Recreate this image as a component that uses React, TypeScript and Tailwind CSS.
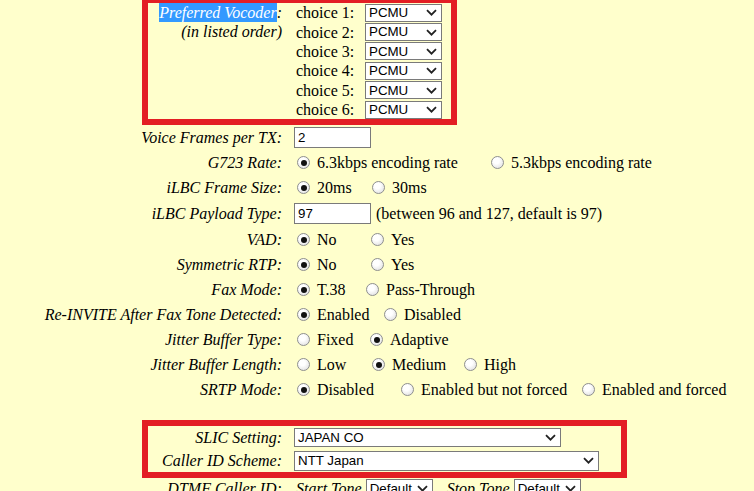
import React from 'react';

type Opt = { label: string; checked?: boolean; w?: string };

const Radio = ({ checked }: { checked?: boolean }) => (
  <span className="inline-flex w-[13px] h-[13px] shrink-0 items-center justify-center rounded-full border border-[#8e8f8f] bg-[radial-gradient(circle_at_40%_35%,#ffffff_30%,#d9d9d9)]">
    {checked && <span className="w-[6px] h-[6px] rounded-full bg-[#111]" />}
  </span>
);

const Option = ({ label, checked, w }: Opt) => (
  <span className={`flex items-center gap-[7px] whitespace-nowrap ${w ?? ''}`}>
    <Radio checked={checked} />
    {label}
  </span>
);

const Select = ({ value, w, h = 'h-[19px]' }: { value: string; w: string; h?: string }) => (
  <div
    className={`flex items-center justify-between bg-white border border-[#7a7a7a] pl-[3px] pr-[4px] text-[13.33px] leading-none text-black font-['Liberation_Sans',Arial,sans-serif] ${w} ${h}`}
  >
    <span>{value}</span>
    <svg width="11" height="7" viewBox="0 0 11 7" fill="none">
      <path d="M1 1.2l4.5 4.5 4.5-4.5" stroke="#222" strokeWidth="1.8" />
    </svg>
  </div>
);

const TextInput = ({ value }: { value: string }) => (
  <div className="w-[77px] h-[21px] flex items-center bg-white border border-[#7a7a7a] pl-[3px] text-[13.33px] font-['Liberation_Sans',Arial,sans-serif]">
    {value}
  </div>
);

const Row = ({ label, h, children }: { label: string; h: string; children: React.ReactNode }) => (
  <div className={`flex items-center ${h}`}>
    <div className="w-[282px] text-right italic whitespace-nowrap">{label}</div>
    <div className="ml-[12px] flex items-center">{children}</div>
  </div>
);

const radioRows: { label: string; opts: Opt[] }[] = [
  { label: 'VAD:', opts: [{ label: 'No', checked: true, w: 'w-[74px]' }, { label: 'Yes' }] },
  { label: 'Symmetric RTP:', opts: [{ label: 'No', checked: true, w: 'w-[74px]' }, { label: 'Yes' }] },
  { label: 'Fax Mode:', opts: [{ label: 'T.38', checked: true, w: 'w-[69px]' }, { label: 'Pass-Through' }] },
  {
    label: 'Re-INVITE After Fax Tone Detected:',
    opts: [{ label: 'Enabled', checked: true, w: 'w-[87px]' }, { label: 'Disabled' }],
  },
  { label: 'Jitter Buffer Type:', opts: [{ label: 'Fixed', w: 'w-[73px]' }, { label: 'Adaptive', checked: true }] },
  {
    label: 'Jitter Buffer Length:',
    opts: [{ label: 'Low', w: 'w-[75px]' }, { label: 'Medium', checked: true, w: 'w-[92px]' }, { label: 'High' }],
  },
  {
    label: 'SRTP Mode:',
    opts: [
      { label: 'Disabled', checked: true, w: 'w-[104px]' },
      { label: 'Enabled but not forced', w: 'w-[181px]' },
      { label: 'Enabled and forced' },
    ],
  },
];

export default function App() {
  return (
    <div className="w-[754px] h-[491px] overflow-hidden bg-[#ffffcc] text-black text-[16px] leading-[19px] font-['Liberation_Serif','Times_New_Roman',serif]">
      {/* Vocoder box (page is scrolled, top border off screen) */}
      <div className="ml-[142px] -mt-[3px] w-[315px] border-[6px] border-[#e31e24]">
        <div className="flex">
          <div className="w-[134px] text-right italic leading-[19.4px]">
            <div>
              <span className="bg-[#3399ff] text-white py-[1px]">Preferred Vocoder</span>:
            </div>
            <div>(in listed order)</div>
          </div>
          <div className="ml-[14px]">
            {[1, 2, 3, 4, 5, 6].map(n => (
              <div key={n} className="flex items-center h-[19.4px]">
                <span className="w-[69px]">choice {n}:</span>
                <Select value="PCMU" w="w-[77px]" h="h-[18px]" />
              </div>
            ))}
          </div>
        </div>
      </div>

      <Row label="Voice Frames per TX:" h="h-[25px]">
        <TextInput value="2" />
      </Row>
      <Row label="G723 Rate:" h="h-[25px]">
        <span className="ml-[3px] flex">
          <Option label="6.3kbps encoding rate" checked w="w-[194px]" />
          <Option label="5.3kbps encoding rate" />
        </span>
      </Row>
      <Row label="iLBC Frame Size:" h="h-[25px]">
        <span className="ml-[3px] flex">
          <Option label="20ms" checked w="w-[75px]" />
          <Option label="30ms" />
        </span>
      </Row>
      <Row label="iLBC Payload Type:" h="h-[27px]">
        <TextInput value="97" />
        <span className="ml-[5px]">(between 96 and 127, default is 97)</span>
      </Row>
      {radioRows.map(r => (
        <Row key={r.label} label={r.label} h="h-[25px]">
          <span className="ml-[3px] flex">
            {r.opts.map(o => (
              <Option key={o.label} {...o} />
            ))}
          </span>
        </Row>
      ))}

      {/* SLIC box */}
      <div className="ml-[142px] mt-[18px] w-[485px] border-[6px] border-[#e31e24]">
        <div className="flex items-center h-[23px]">
          <div className="w-[134px] text-right italic">SLIC Setting:</div>
          <div className="ml-[12px]">
            <Select value="JAPAN CO" w="w-[267px]" />
          </div>
        </div>
        <div className="flex items-center h-[23px]">
          <div className="w-[134px] text-right italic">Caller ID Scheme:</div>
          <div className="ml-[12px]">
            <Select value="NTT Japan" w="w-[305px]" h="h-[20px]" />
          </div>
        </div>
      </div>

      <div className="flex items-center h-[20px]">
        <div className="w-[282px] text-right italic">DTMF Caller ID:</div>
        <div className="ml-[14px] flex items-center">
          <span className="italic">Start Tone</span>
          <span className="ml-[4px]">
            <Select value="Default" w="w-[67px]" />
          </span>
          <span className="italic ml-[14px]">Stop Tone</span>
          <span className="ml-[4px]">
            <Select value="Default" w="w-[67px]" />
          </span>
        </div>
      </div>
    </div>
  );
}
